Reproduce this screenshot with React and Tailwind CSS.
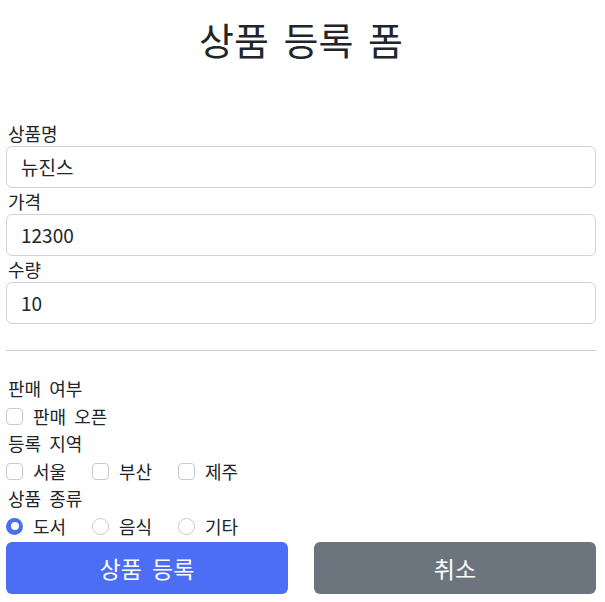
export default function App() {
  const font = { fontFamily: '"Noto Sans CJK KR", "Noto Sans", sans-serif' }

  const Check = ({ label }) => (
    <label className="flex items-center w-[86px]">
      <span className="w-[17px] h-[17px] rounded-[4px] border border-[#c7c9cc] bg-white" />
      <span className="ml-[10px]">{label}</span>
    </label>
  )

  const Radio = ({ label, checked }) => (
    <label className="flex items-center w-[86px]">
      {checked ? (
        <span className="w-[17px] h-[17px] rounded-full bg-[#4b6ef5] flex items-center justify-center">
          <span className="w-[8px] h-[8px] rounded-full bg-white" />
        </span>
      ) : (
        <span className="w-[17px] h-[17px] rounded-full border border-[#c7c9cc] bg-white" />
      )}
      <span className="ml-[10px]">{label}</span>
    </label>
  )

  const Field = ({ label, value }) => (
    <div>
      <div className="h-[26px] leading-[26px] pl-[2px]">{label}</div>
      <div className="h-[42px] rounded-[6px] border border-[#ced4da] flex items-center px-[14px] text-[19px]">
        {value}
      </div>
    </div>
  )

  return (
    <div style={font} className="min-h-screen bg-white text-[#212529] text-[18px] [word-spacing:4px] pl-[6px] pr-[9px]">
      <h2 className="h-[76px] flex items-center justify-center text-[38px] font-normal [word-spacing:6px]">상품 등록 폼</h2>

      <div className="mt-[44px]">
        <Field label="상품명" value="뉴진스" />
        <Field label="가격" value="12300" />
        <Field label="수량" value="10" />
      </div>

      <hr className="mt-[26px] border-t border-[#cbcccd]" />

      <div className="mt-[24px] leading-[27.5px]">
        <div className="h-[27.5px] pl-[2px]">판매 여부</div>
        <div className="h-[27.5px] flex items-center">
          <label className="flex items-center">
            <span className="w-[17px] h-[17px] rounded-[4px] border border-[#c7c9cc] bg-white" />
            <span className="ml-[10px]">판매 오픈</span>
          </label>
        </div>
        <div className="h-[27.5px] pl-[2px]">등록 지역</div>
        <div className="h-[27.5px] flex items-center">
          <Check label="서울" />
          <Check label="부산" />
          <Check label="제주" />
        </div>
        <div className="h-[27.5px] pl-[2px]">상품 종류</div>
        <div className="h-[27.5px] flex items-center">
          <Radio label="도서" checked />
          <Radio label="음식" />
          <Radio label="기타" />
        </div>
      </div>

      <div className="mt-[2px] grid grid-cols-2 gap-[26px]">
        <button className="h-[52px] rounded-[6px] bg-[#4b6ef5] text-white text-[23px] [word-spacing:5px]">상품 등록</button>
        <button className="h-[52px] rounded-[6px] bg-[#6c757d] text-white text-[23px] [word-spacing:5px]">취소</button>
      </div>
    </div>
  )
}
